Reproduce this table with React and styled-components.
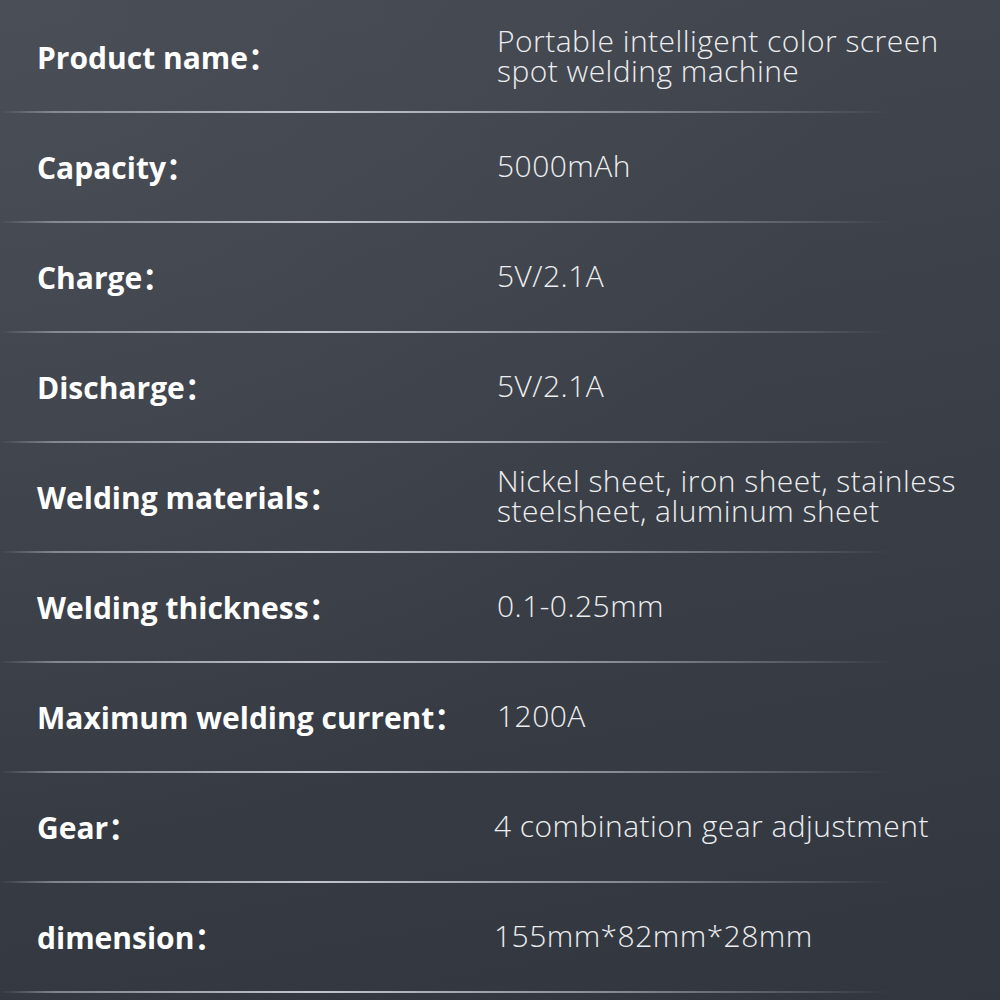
import styled, { createGlobalStyle } from 'styled-components';

const GlobalStyle = createGlobalStyle`
  html, body {
    margin: 0;
    padding: 0;
    background: #3a3e46;
  }
`;

const Page = styled.div`
  width: 1000px;
  height: 1000px;
  box-sizing: border-box;
  padding-top: 3px;
  overflow: hidden;
  background:
    radial-gradient(ellipse at 0% 0%, rgba(80, 84, 92, 0.5), transparent 60%),
    linear-gradient(170deg, #444850 0%, #3b3f47 45%, #32373f 100%);
  display: flex;
  flex-direction: column;
`;

const Row = styled.div`
  position: relative;
  height: 110px;
  box-sizing: border-box;
  padding: 0 20px 5px 37px;
  display: grid;
  grid-template-columns: 460px 1fr;
  align-items: center;

  &::after {
    content: "";
    position: absolute;
    left: 0;
    bottom: 0;
    width: 890px;
    height: 2px;
    background: linear-gradient(
      90deg,
      rgba(170, 174, 182, 0) 0%,
      rgba(175, 178, 186, 0.6) 6%,
      rgba(210, 212, 218, 0.9) 35%,
      rgba(185, 188, 195, 0.6) 70%,
      rgba(150, 154, 162, 0.25) 92%,
      rgba(150, 154, 162, 0) 100%
    );
  }
`;

const Label = styled.div`
  font-family: "Open Sans", "Noto Sans CJK SC", sans-serif;
  font-weight: 700;
  font-size: 30px;
  color: #ffffff;
`;

const Value = styled.div`
  font-family: "Open Sans", "Noto Sans CJK SC", sans-serif;
  font-weight: 300;
  font-size: 30px;
  line-height: 30px;
  letter-spacing: 0.45px;
  color: #eceef0;
  margin-left: ${p => (p.$shift ? '-3px' : '0')};
`;

const specs = [
  { label: 'Product name', value: 'Portable intelligent color screen spot welding machine' },
  { label: 'Capacity', value: '5000mAh' },
  { label: 'Charge', value: '5V/2.1A' },
  { label: 'Discharge', value: '5V/2.1A' },
  { label: 'Welding materials', value: 'Nickel sheet, iron sheet, stainless steelsheet, aluminum sheet' },
  { label: 'Welding thickness', value: '0.1-0.25mm' },
  { label: 'Maximum welding current', value: '1200A' },
  { label: 'Gear', value: '4 combination gear adjustment', shift: true },
  { label: 'dimension', value: '155mm*82mm*28mm', shift: true },
];

export default function App() {
  return (
    <>
      <GlobalStyle />
      <Page>
        {specs.map(s => (
          <Row key={s.label}>
            <Label>{s.label}：</Label>
            <Value $shift={s.shift}>{s.value}</Value>
          </Row>
        ))}
      </Page>
    </>
  );
}
